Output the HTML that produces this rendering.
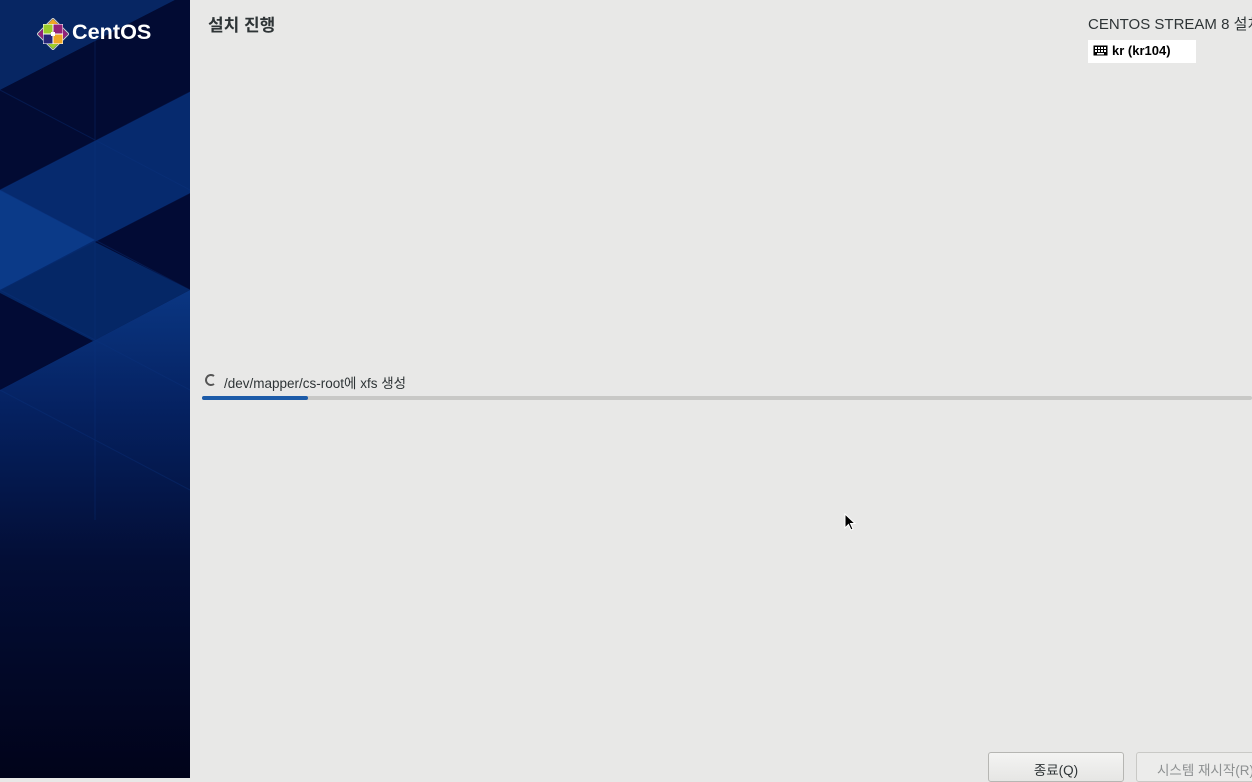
<!DOCTYPE html>
<html><head><meta charset="utf-8"><style>
body{margin:0;width:1252px;height:778px;overflow:hidden;background:#e8e8e7;font-family:"Liberation Sans","Noto Sans CJK KR",sans-serif;position:relative}
#side{position:absolute;left:0;top:0;width:190px;height:778px;background:#010520;overflow:hidden}
.t{position:absolute;font-family:"Liberation Sans","Noto Sans CJK KR",sans-serif}
</style></head><body>
<div id="side">
<svg width="190" height="778" style="position:absolute;left:0;top:0">
<defs>
<linearGradient id="fade" x1="0" y1="290" x2="0" y2="560" gradientUnits="userSpaceOnUse"><stop offset="0" stop-color="#0a3682"/><stop offset="0.45" stop-color="#052160"/><stop offset="1" stop-color="#030e36"/></linearGradient>
<linearGradient id="bot" x1="0" y1="560" x2="0" y2="778" gradientUnits="userSpaceOnUse"><stop offset="0" stop-color="#030e36"/><stop offset="1" stop-color="#01031a"/></linearGradient>
</defs>
<rect width="190" height="778" fill="url(#bot)"/>
<polygon points="0,0 175,0 0,90" fill="#072663"/>
<polygon points="175,0 190,0 190,92 0,190 0,90" fill="#020b33"/>
<polygon points="0,190 190,92 190,193 0,290" fill="#062a6e"/>
<polygon points="0,190 95,240 0,290" fill="#0b3a88"/>
<polygon points="0,290 190,193 190,290 0,390" fill="#052766"/>
<polygon points="95,242 190,193 190,290" fill="#020b35"/>
<polygon points="0,293 95,342 0,390" fill="#020b35"/>
<polygon points="0,390 190,290 190,561 0,561" fill="url(#fade)"/>
<g stroke="#0c3480" stroke-width="1" opacity="0.35" fill="none">
<line x1="95" y1="40" x2="95" y2="520"/>
<line x1="0" y1="90" x2="190" y2="190"/>
<line x1="0" y1="190" x2="190" y2="290"/>
<line x1="0" y1="290" x2="190" y2="390"/>
<line x1="0" y1="390" x2="190" y2="490"/>
<line x1="0" y1="190" x2="190" y2="92"/>
<line x1="0" y1="290" x2="190" y2="193"/>
</g>
</svg>
<svg width="32" height="32" viewBox="0 0 32 32" style="position:absolute;left:37px;top:18px">
<polygon points="16,0 32,16 16,32 0,16" fill="none" stroke="#d0d0d0" stroke-width="1"/>
<polygon points="16,1 21,6 11,6" fill="#efa724"/>
<polygon points="31,16 26,21 26,11" fill="#932279"/>
<polygon points="16,31 11,26 21,26" fill="#9ccd2a"/>
<polygon points="1,16 6,11 6,21" fill="#932279"/>
<rect x="6" y="6" width="20" height="20" fill="#fff"/>
<rect x="6.5" y="6.5" width="9" height="9" fill="#9ccd2a"/>
<rect x="16.5" y="6.5" width="9" height="9" fill="#932279"/>
<rect x="6.5" y="16.5" width="9" height="9" fill="#262577"/>
<rect x="16.5" y="16.5" width="9" height="9" fill="#efa724"/>
<rect x="14" y="14" width="4" height="4" fill="#fff"/>
</svg>
<div class="t" style="left:72px;top:21px;color:#fff;font-size:21px;font-weight:bold;transform:scaleX(1.03);transform-origin:left">CentOS</div>
</div>
<div class="t" style="left:208px;top:11px;font-size:17px;font-weight:bold;color:#2e3436">설치 진행</div>
<div class="t" style="left:1088px;top:13px;font-size:15px;color:#2e3436;white-space:nowrap">CENTOS STREAM 8 설치</div>
<div style="position:absolute;left:1088px;top:40px;width:108px;height:23px;background:#fff"></div>
<svg width="15" height="11" style="position:absolute;left:1093px;top:45px"><rect x="0.5" y="0.5" width="14" height="10" fill="#000"/><g fill="#fff"><rect x="2" y="2" width="2" height="2"/><rect x="5" y="2" width="2" height="2"/><rect x="8" y="2" width="2" height="2"/><rect x="11" y="2" width="2" height="2"/><rect x="2" y="5" width="2" height="2"/><rect x="5" y="5" width="2" height="2"/><rect x="8" y="5" width="2" height="2"/><rect x="11" y="5" width="2" height="2"/><rect x="4" y="8" width="7" height="1.5"/></g></svg>
<div class="t" style="left:1112px;top:43px;font-size:13px;font-weight:bold;color:#000">kr (kr104)</div>
<svg width="14" height="14" style="position:absolute;left:203px;top:373px"><path d="M11,3 A5,5 0 1 0 11,11" fill="none" stroke="#555" stroke-width="2"/></svg>
<div class="t" style="left:224px;top:372px;font-size:13.5px;color:#2e3436">/dev/mapper/cs-root에 xfs 생성</div>
<div style="position:absolute;left:202px;top:396px;width:1050px;height:4px;background:#c8c8c6;border-radius:2px"></div>
<div style="position:absolute;left:202px;top:396px;width:106px;height:4px;background:#1c5ba8;border-radius:2px"></div>
<svg width="14" height="20" style="position:absolute;left:844px;top:513px"><path d="M1,1 L1,15 L4.5,11.5 L7,17 L9,16 L6.5,10.5 L11,10.5 Z" fill="#000" stroke="#fff" stroke-width="1"/></svg>
<div style="position:absolute;left:988px;top:752px;width:136px;height:30px;border:1px solid #b6b6b3;border-radius:3px;background:linear-gradient(#f4f4f3,#e6e6e4);box-sizing:border-box"></div>
<div class="t" style="left:988px;top:759px;width:136px;text-align:center;font-size:13.5px;color:#2e3436">종료(Q)</div>
<div style="position:absolute;left:1136px;top:752px;width:134px;height:30px;border:1px solid #c9c9c6;border-radius:3px;background:#ececeb;box-sizing:border-box"></div>
<div class="t" style="left:1157px;top:759px;font-size:13.5px;color:#8d9091;white-space:nowrap">시스템 재시작(R)</div>
</body></html>
